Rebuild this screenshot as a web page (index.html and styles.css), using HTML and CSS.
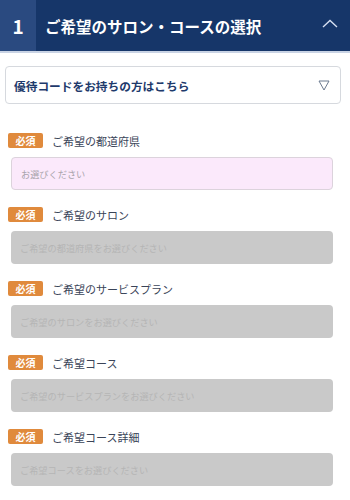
FILE: index.html
```html
<!DOCTYPE html>
<html lang="ja">
<head>
<meta charset="utf-8">
<link rel="stylesheet" href="styles.css">
</head>
<body>
<header class="head">
  <div class="num">1</div>
  <div class="title">ご希望のサロン・コースの選択</div>
  <svg class="chev" width="16" height="9" viewBox="0 0 16 9"><path d="M1 8 L8 1.5 L15 8" fill="none" stroke="#d6e0f2" stroke-width="1.4"/></svg>
</header>
<main class="content">
  <div class="coupon">
    <span class="coupon-text">優待コードをお持ちの方はこちら</span>
    <svg class="tri" width="12" height="11" viewBox="0 0 12 11"><path d="M1 1 H11 L6 10 Z" fill="none" stroke="#6b7a90" stroke-width="1"/></svg>
  </div>
  <div class="field">
    <div class="label-row"><span class="badge">必須</span><span class="label">ご希望の都道府県</span></div>
    <div class="input active">お選びください</div>
  </div>
  <div class="field">
    <div class="label-row"><span class="badge">必須</span><span class="label">ご希望のサロン</span></div>
    <div class="input disabled">ご希望の都道府県をお選びください</div>
  </div>
  <div class="field">
    <div class="label-row"><span class="badge">必須</span><span class="label">ご希望のサービスプラン</span></div>
    <div class="input disabled">ご希望のサロンをお選びください</div>
  </div>
  <div class="field">
    <div class="label-row"><span class="badge">必須</span><span class="label">ご希望コース</span></div>
    <div class="input disabled">ご希望のサービスプランをお選びください</div>
  </div>
  <div class="field">
    <div class="label-row"><span class="badge">必須</span><span class="label">ご希望コース詳細</span></div>
    <div class="input disabled">ご希望コースをお選びください</div>
  </div>
</main>
</body>
</html>
```

FILE: styles.css
```css
html, body {
  margin: 0;
  padding: 0;
  background: #ffffff;
  font-family: "Noto Sans CJK JP", "Noto Sans", sans-serif;
}
.head {
  display: flex;
  align-items: center;
  height: 51px;
  background: #163669;
  border-bottom: 2px solid #c9d3e4;
}
.num {
  width: 36px;
  height: 100%;
  background: #2a4a80;
  color: #ffffff;
  font-size: 19px;
  font-weight: 700;
  display: flex;
  align-items: center;
  justify-content: center;
}
.title {
  flex: 1;
  padding-left: 9px;
  color: #ffffff;
  font-size: 15.5px;
  font-weight: 700;
}
.chev {
  margin-right: 12px;
  margin-bottom: 4px;
}
.content {
  padding: 13px 9px 0 5px;
}
.coupon {
  display: flex;
  align-items: center;
  justify-content: space-between;
  height: 36px;
  border: 1px solid #d6d9de;
  border-radius: 4px;
  padding: 0 10px 0 8px;
  margin-bottom: 29px;
}
.coupon-text {
  color: #1e3a6c;
  font-size: 11.7px;
  font-weight: 700;
}
.field {
  padding-left: 3px;
  margin-bottom: 17px;
}
.label-row {
  display: flex;
  align-items: center;
  height: 15px;
  margin-bottom: 9px;
}
.badge {
  width: 35px;
  height: 15px;
  background: #e08a3c;
  color: #ffffff;
  font-size: 10px;
  font-weight: 700;
  border-radius: 2px;
  display: flex;
  align-items: center;
  justify-content: center;
  line-height: 1;
}
.label {
  margin-left: 9px;
  color: #3a4458;
  font-size: 11px;
}
.input {
  margin-left: 3px;
  width: 322px;
  height: 33px;
  box-sizing: border-box;
  border-radius: 4px;
  display: flex;
  align-items: center;
  padding-left: 9px;
  font-size: 9.2px;
}
.input.active {
  background: #fbe9fb;
  border: 1px solid #dcd3dc;
  color: #a9a4ab;
}
.input.disabled {
  background: #c9c9c9;
  color: #b5b5b5;
}
```
